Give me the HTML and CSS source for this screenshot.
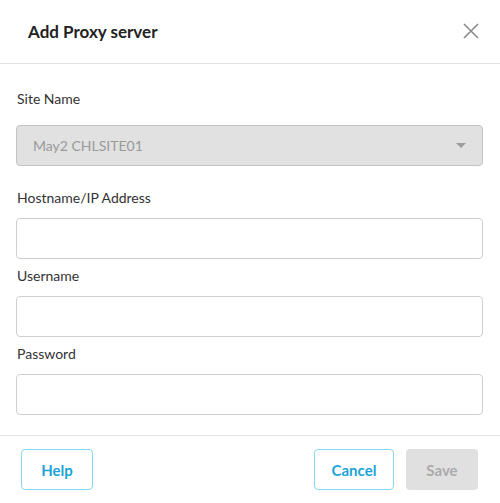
FILE: index.html
```html
<!DOCTYPE html>
<html lang="en">
<head>
  <meta charset="UTF-8" />
  <meta name="viewport" content="width=device-width, initial-scale=1" />
  <title>Add Proxy server</title>
  <link rel="stylesheet" href="styles.css">
</head>
<body>
  <div class="dialog">
    <header>
      <h1>Add Proxy server</h1>
      <button class="close-btn" title="Close">
        <svg width="16" height="16" viewBox="0 0 16 16">
          <path d="M1 1L15 15M15 1L1 15" stroke="#8a8a8a" stroke-width="1.6" fill="none" />
        </svg>
      </button>
    </header>

    <section class="body">
      <div class="field site">
        <label>Site Name</label>
        <div class="select">
          <span>May2 CHLSITE01</span>
          <span class="caret"></span>
        </div>
      </div>
      <div class="field">
        <label>Hostname/IP Address</label>
        <input type="text" />
      </div>
      <div class="field">
        <label>Username</label>
        <input type="text" />
      </div>
      <div class="field">
        <label>Password</label>
        <input type="password" />
      </div>
    </section>

    <footer>
      <button class="btn outline help">Help</button>
      <div class="right-buttons">
        <button class="btn outline cancel">Cancel</button>
        <button class="btn disabled" disabled>Save</button>
      </div>
    </footer>
  </div>
</body>
</html>
```

FILE: styles.css
```css
body {
  margin: 0;
  font-family: Lato, "Liberation Sans", sans-serif;
  background: #fff;
  color: #222;
}
.dialog {
  width: 500px;
  height: 503px;
  background: #fff;
}
header {
  display: flex;
  align-items: center;
  justify-content: space-between;
  height: 63px;
  padding: 0 21px 0 28px;
  border-bottom: 1px solid #e2e2e2;
}
h1 {
  margin: 0;
  font-size: 17px;
  font-weight: 700;
  color: #222;
}
.close-btn {
  background: none;
  border: none;
  padding: 0;
  width: 16px;
  height: 16px;
  cursor: pointer;
  margin-top: -2px;
}
.body {
  padding: 25px 17px 20px 16px;
}
.field {
  display: flex;
  flex-direction: column;
  margin-bottom: 5px;
}
.field:last-child {
  margin-bottom: 0;
}
.field.site {
  margin-bottom: 20px;
}
label {
  font-size: 14px;
  line-height: 20px;
  color: #333;
  padding-left: 1px;
  margin: 2px 0 10px;
}
.field.site label {
  margin: 0 0 16px;
}
input {
  height: 41px;
  box-sizing: border-box;
  border: 1px solid #cfcfcf;
  border-radius: 4px;
  padding: 0 16px;
  font-size: 14px;
  font-family: inherit;
}
.select {
  display: flex;
  align-items: center;
  justify-content: space-between;
  height: 41px;
  box-sizing: border-box;
  border: 1px solid #c4c4c4;
  border-radius: 4px;
  background: #e1e1e1;
  padding: 0 16px;
  font-size: 14px;
  color: #9a9a9a;
}
.caret {
  width: 0;
  height: 0;
  border-left: 5px solid transparent;
  border-right: 5px solid transparent;
  border-top: 5px solid #9c9c9c;
}
footer {
  display: flex;
  justify-content: space-between;
  align-items: center;
  border-top: 1px solid #e2e2e2;
  padding: 13px 22px 0 21px;
}
.right-buttons {
  display: flex;
  gap: 12px;
}
.btn {
  height: 41px;
  box-sizing: border-box;
  border-radius: 4px;
  font-family: inherit;
  font-size: 15px;
  font-weight: 700;
  cursor: pointer;
}
.btn.outline {
  background: #fff;
  border: 1px solid #86d8f2;
  color: #1ba3d8;
}
.help {
  width: 72px;
}
.cancel {
  width: 80px;
}
.btn.disabled {
  width: 72px;
  background: #e0e0e0;
  border: none;
  color: #ababab;
  cursor: default;
}
```
